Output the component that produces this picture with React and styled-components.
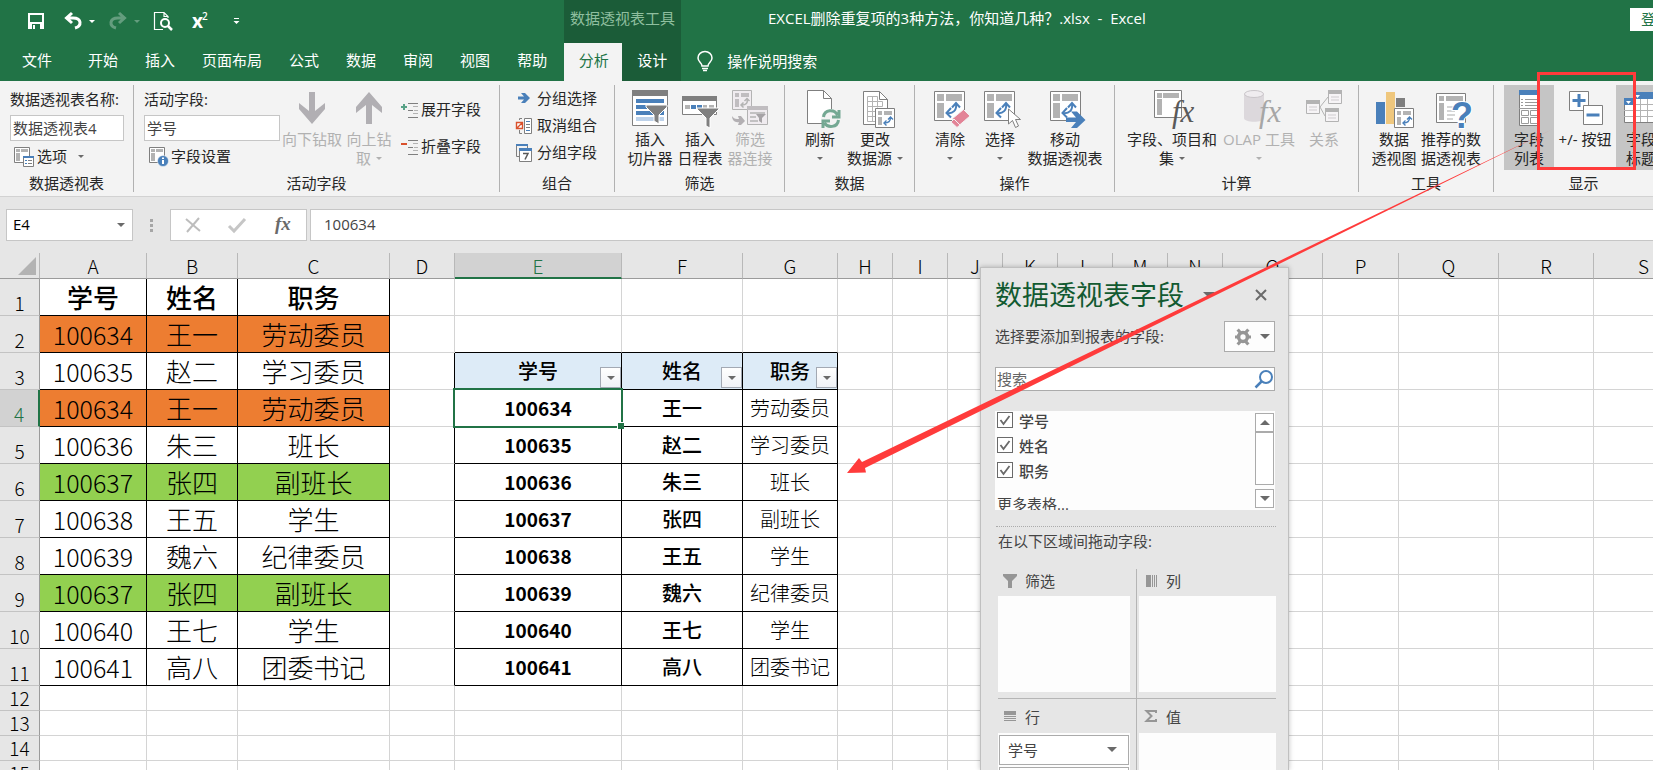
import React, { useCallback, useState } from "react";
import styled, { createGlobalStyle } from "styled-components";

const GlobalStyle = createGlobalStyle`
  * {
    box-sizing: border-box;
  }

  body {
    margin: 0;
    overflow: hidden;
    font-family: "Open Sans", "Noto Sans CJK SC", sans-serif;
    font-size: 15px;
    color: #262626;
  }

  button, input {
    font: inherit;
    color: inherit;
  }

  button {
    padding: 0;
    border: 0;
    background: none;
  }

  svg {
    display: block;
    flex: none;
    overflow: visible;
  }
`;

const Page = styled.div`
  position: relative;
  display: flex;
  flex-direction: column;
  height: 100vh;
  overflow: hidden;
  background-color: #e6e6e6;
`;

/* title bar and tabs */

const TitleBar = styled.header`
  display: flex;
  height: 43px;
  background-color: #217346;
  color: #fff;
`;

const QuickBar = styled.div`
  flex: 0 0 564px;
  display: flex;
  align-items: center;
  gap: 14px;
  padding-left: 28px;
  padding-bottom: 1px;
`;

const QuickButton = styled.button`
  display: flex;
  align-items: center;
  gap: 7px;
  color: #fff;
  opacity: ${(props) => (props.disabled ? 0.3 : 1)};

  &.plain {
    padding-right: 6px;
  }
`;

const ToolTitle = styled.div`
  flex: 0 0 117px;
  line-height: 36px;
  text-align: center;
  background-color: #1b5c38;
  color: #8fbf9f;
`;

const DocTitle = styled.div`
  flex: 1;
  padding-left: 87px;
  line-height: 36px;
  white-space: pre;
`;

const LoginButton = styled.button`
  flex: none;
  align-self: flex-start;
  height: 23px;
  margin: 8px -29px 0 0;
  padding: 0 11px;
  line-height: 23px;
  background-color: #fff;
  color: #217346;
`;

const TabBar = styled.nav`
  display: flex;
  height: 38px;
  padding-left: 9px;
  background-color: #217346;
`;

const Tab = styled.button`
  height: 38px;
  padding: 0 13px 5px 14px;
  color: #fff;

  &.file {
    margin-right: 8px;
    padding-left: 13px;
    padding-right: 14px;
  }

  &.active {
    width: 58px;
    margin-left: 4px;
    background-color: #f3f3f3;
    color: #217346;
  }

  &.tool {
    width: 59px;
    background-color: #1b5c38;
  }
`;

const TellMe = styled.button`
  display: flex;
  align-items: center;
  gap: 14px;
  margin-left: 16px;
  padding-bottom: 3px;
  color: #fff;
`;

/* ribbon */

const Ribbon = styled.section`
  display: flex;
  flex: none;
  height: 116px;
  padding-top: 4px;
  overflow: hidden;
  background-color: #f3f3f3;
  border-bottom: 1px solid #d2d2d2;
`;

const Group = styled.div`
  flex: 0 0 ${(props) => props.$width}px;
  display: flex;
  flex-direction: column;
  height: 107px;
  border-right: 1px solid #b1b1b1;
`;

const GroupBody = styled.div`
  flex: none;
  display: flex;
  height: 85px;
  padding-left: ${(props) => props.$left || 10}px;
`;

const GroupLabel = styled.div`
  flex: none;
  margin-top: 3px;
  line-height: 21px;
  text-align: center;
`;

const FieldCol = styled.div`
  width: ${(props) => props.$width}px;
`;

const FieldLabel = styled.label`
  display: block;
  height: 30px;
  line-height: 28px;
  white-space: nowrap;
`;

const FieldInput = styled.input`
  display: block;
  width: 100%;
  height: 26px;
  padding: 0 2px 1px;
  border: 1px solid #c6c6c6;
  background-color: #fff;
  color: #444;
`;

const SmallList = styled.div`
  display: flex;
  flex-direction: column;
  padding: ${(props) => props.$top || 0}px 0 0 ${(props) => props.$left || 0}px;
`;

const SmallButton = styled.button`
  display: flex;
  align-items: center;
  gap: 3px;
  height: ${(props) => props.$height || 27}px;
  line-height: 24px;
  white-space: nowrap;

  & > span {
    padding-bottom: 2px;
  }
`;

const BigButton = styled.button`
  flex: 0 0 ${(props) => props.$width || 50}px;
  display: flex;
  flex-direction: column;
  align-items: center;
  height: 85px;
  padding-top: 3px;
  line-height: 19px;
  white-space: nowrap;
  color: ${(props) => (props.disabled ? "#b1b1b1" : "#262626")};

  &.on {
    background-color: #c5c5c5;
  }

  & > svg {
    margin-bottom: 2px;
  }
`;

const Line = styled.span`
  display: flex;
  align-items: center;
  gap: 5px;
  height: 19px;
`;

const Caret = styled.i`
  width: 0;
  height: 0;
  border: ${(props) => props.$size || 3}px solid transparent;
  border-top-color: ${(props) => props.$color || "#6a6a6a"};
  border-bottom: 0;

  &.far {
    margin-left: 8px;
  }
`;

/* formula bar */

const FormulaBar = styled.div`
  display: flex;
  flex: none;
  height: 56px;
  padding: 12px 0 12px 6px;
`;

const NameBox = styled.div`
  display: flex;
  align-items: center;
  width: 127px;
  padding-right: 7px;
  border: 1px solid #c6c6c6;
  background-color: #fff;

  & > input {
    flex: 1;
    width: 60px;
    border: 0;
    padding: 0 6px 2px;
    background: none;
    color: #000;
  }
`;

const Dots = styled.div`
  display: flex;
  flex-direction: column;
  justify-content: center;
  align-items: center;
  gap: 2px;
  width: 37px;

  & > i {
    width: 3px;
    height: 3px;
    background-color: #a6a6a6;
  }
`;

const FormulaTools = styled.div`
  display: flex;
  align-items: center;
  justify-content: space-around;
  width: 137px;
  margin-right: 3px;
  border: 1px solid #c6c6c6;
  background-color: #fff;
`;

const FormulaInput = styled.input`
  flex: 1;
  padding: 0 13px 2px;
  border: 1px solid #c6c6c6;
  border-right: 0;
  background-color: #fff;
  color: #444;
`;

/* sheet */

const SheetWrap = styled.main`
  flex: 1;
  overflow: hidden;
  background-color: #fff;
`;

const Sheet = styled.table`
  width: 1694px;
  table-layout: fixed;
  border-collapse: separate;
  border-spacing: 0;
  color: #000;
  font-family: "Noto Sans CJK SC", sans-serif;

  th,
  td {
    padding: 0;
    border: 0 solid #d4d4d4;
    border-width: 0 1px 1px 0;
    text-align: center;
    white-space: nowrap;
  }
`;

const ColHead = styled.th`
  height: 26px;
  font-size: 19px;
  font-weight: 300;
  line-height: 24px;
  vertical-align: bottom;
  background-color: #e6e6e6;

  && {
    border-right-color: #b8b8b8;
    border-bottom-color: #9b9b9b;
  }

  &&.current {
    border-bottom: 2px solid #217346;
    background-color: #d2d2d2;
    color: #217346;
    line-height: 22px;
  }
`;

const Corner = styled(ColHead)`
  & > svg {
    margin: 0 3px 3px auto;
  }
`;

const RowHead = styled.th`
  height: ${(props) => props.$height}px;
  font-size: 19px;
  font-weight: 300;
  line-height: 24px;
  vertical-align: bottom;
  background-color: #e6e6e6;

  && {
    border-right-color: #9b9b9b;
    border-bottom-color: #c3c3c3;
  }

  &&.current {
    border-right: 2px solid #217346;
    background-color: #d2d2d2;
    color: #217346;
  }
`;

const Cell = styled.td`
  position: relative;
  background-color: ${(props) => props.$fill || "#fff"};
  font-size: ${(props) => props.$size || 20}px;
  font-weight: ${(props) => props.$weight || 300};
  line-height: 30px;

  && {
    border-right-color: ${(props) => (props.$right ? "#000" : "#d4d4d4")};
    border-bottom-color: ${(props) => (props.$bottom ? "#000" : "#d4d4d4")};
  }
`;

const Selection = styled.span`
  position: absolute;
  inset: -2px;
  z-index: 1;
  border: 2px solid #217346;

  &::after {
    content: "";
    position: absolute;
    right: -3px;
    bottom: -3px;
    width: 6px;
    height: 6px;
    border: 1px solid #fff;
    border-width: 1px 0 0 1px;
    background-color: #217346;
  }
`;

const FilterButton = styled.button`
  position: absolute;
  right: 0;
  bottom: 1px;
  display: flex;
  align-items: center;
  justify-content: center;
  width: 21px;
  height: 21px;
  border: 1px solid #a3a9b3;
  background-image: linear-gradient(#fff, #f0f2f6);
`;

/* pivot field pane, floats over the sheet */

const Pane = styled.aside`
  position: absolute;
  left: 980px;
  top: 267px;
  bottom: 0;
  z-index: 2;
  width: 309px;
  padding: 10px 13px 0 14px;
  overflow: hidden;
  border: 1px solid #c0c0c0;
  border-bottom: 0;
  background-color: #e6e6e6;
  box-shadow: 0 0 5px rgba(0, 0, 0, 0.25);
  color: #444;
`;

const PaneHead = styled.div`
  display: flex;
  align-items: center;
  height: 34px;
  padding-right: 8px;

  & > h2 {
    flex: 1;
    margin: 0;
    font-size: 27px;
    font-weight: 400;
    line-height: 34px;
    color: #125a31;
  }
`;

const CloseButton = styled.button`
  margin-left: 40px;
`;

const PaneRow = styled.div`
  display: flex;
  justify-content: space-between;
  height: 32px;
  margin-top: 9px;
  line-height: 30px;
`;

const GearButton = styled.button`
  display: flex;
  align-items: center;
  justify-content: center;
  gap: 9px;
  width: 51px;
  height: 31px;
  padding-left: 5px;
  border: 1px solid #ababab;
  background-color: #fdfdfd;
`;

const SearchBox = styled.div`
  display: flex;
  align-items: center;
  height: 24px;
  margin-top: 14px;
  padding-right: 1px;
  border: 1px solid #ababab;
  background-color: #fff;

  & > input {
    flex: 1;
    width: 100px;
    height: 20px;
    padding: 0 1px;
    border: 0;
  }

  & > input::placeholder {
    color: #666;
  }
`;

const FieldBox = styled.div`
  display: flex;
  height: 99px;
  margin-top: 20px;
  overflow: hidden;
  background-color: #fdfdfd;
`;

const FieldItems = styled.div`
  flex: 1;
  padding: 0 2px;
`;

const CheckRow = styled.label`
  display: flex;
  align-items: center;
  gap: 6px;
  height: 25px;
  padding-bottom: 7px;
  font-weight: 500;
`;

const CheckMark = styled.span`
  position: relative;
  display: flex;

  & > svg {
    position: absolute;
    inset: 0;
    pointer-events: none;
  }
`;

const Check = styled.input`
  appearance: none;
  width: 16px;
  height: 16px;
  margin: 0;
  border: 1px solid #6a6a6a;
  background-color: #fff;
`;

const MoreLink = styled.a`
  display: block;
  padding-top: 6px;
  line-height: 24px;
  color: #444;
  text-decoration: none;
`;

const Scroller = styled.div`
  display: flex;
  flex-direction: column;
  width: 20px;
  padding: 2px 1px 2px 0;

  & > button {
    display: flex;
    align-items: center;
    justify-content: center;
    height: 19px;
    border: 1px solid #ababab;
    background-color: #fff;
  }
`;

const Thumb = styled.div`
  height: 54px;
  margin-bottom: 4px;
  border: 1px solid #ababab;
  background-color: #fff;
`;

const Drag = styled.p`
  margin: 16px -1px 0 1px;
  padding: 2px 2px 0;
  border-top: 1px dotted #ababab;
  line-height: 25px;
`;

const Areas = styled.div`
  display: grid;
  grid-template-columns: 139px 1fr;
  margin: 15px -1px 0 3px;
`;

const Area = styled.div`
  height: 130px;
  padding: 0 6px 0 0;
  border: 0 solid #b5b5b5;
  border-width: 0 1px 1px 0;

  &:nth-child(even) {
    padding: 0 0 0 2px;
    border-right: 0;
  }

  & > h3 {
    display: flex;
    align-items: center;
    gap: 8px;
    height: 27px;
    margin: 0;
    padding: 0 0 4px 5px;
    font-size: 15px;
    font-weight: 400;
  }

  &:nth-child(n + 3) > h3 {
    height: 34px;
    padding-bottom: 0;
  }
`;

const AreaBox = styled.div`
  height: 96px;
  padding: 2px 1px;
  background-color: #fdfdfd;
`;

const AreaItem = styled.button`
  display: flex;
  align-items: center;
  justify-content: space-between;
  width: 100%;
  height: 30px;
  margin-bottom: 2px;
  padding: 0 11px 1px 8px;
  border: 1px solid #ababab;
  background-color: #fff;
`;

const Annotation = styled.svg`
  position: absolute;
  inset: 0;
  z-index: 3;
  width: 100%;
  height: 100%;
  pointer-events: none;
`;

/* icons */

const BLUE = "#4a80ba";
const GRAY = "#7f7f7f";
const SOFT = "#b3b3b3";

function Big({ children }) {
  return (
    <svg width="40" height="40" viewBox="0 0 40 40" aria-hidden="true">
      {children}
    </svg>
  );
}

function Small({ children, width = 20 }) {
  return (
    <svg width={width} height="20" viewBox={`0 0 ${width} 20`} aria-hidden="true">
      {children}
    </svg>
  );
}

function SwapArrow({ color = BLUE }) {
  return (
    <g fill="none" stroke={color} strokeWidth="2">
      <path d="M17 25C23 26 27 22 26 16" />
      <path d="M22 19.500L26 15L30 19.500M21 20L16.500 25L21 29.500" />
    </g>
  );
}

function PivotBase({ x = 0 }) {
  return (
    <g transform={`translate(${x} 0)`}>
      <path d="M4.500 3.500h30v29h-30z" fill="#fff" stroke={GRAY} />
      <path d="M7 6h7v7H7zM16 6h16v7H16zM7 15h7v15H7z" fill={SOFT} />
      <SwapArrow />
    </g>
  );
}

function MiniPivot() {
  return (
    <g>
      <path d="M20.500 20.500h19v19h-19z" fill="#fff" stroke={GRAY} />
      <path d="M23 23h4v4h-4zM29 23h8v4h-8zM23 29h4v8h-4z" fill={SOFT} />
      <path
        d="M29.500 35C33.500 35 35.500 33 35.500 29.500M33 31.500L35.500 29L38 31.500M31.500 32.500L29 35L31.500 37.500"
        fill="none"
        stroke={BLUE}
        strokeWidth="1.400"
      />
    </g>
  );
}

function FxText({ color }) {
  return (
    <text
      x="20"
      y="34"
      fill={color}
      fontFamily="Liberation Serif"
      fontStyle="italic"
      fontSize="31"
    >
      fx
    </text>
  );
}

const icons = {
  save: (
    <svg width="16" height="16" viewBox="0 0 16 16">
      <path d="M1 1h14v14H1z" fill="none" stroke="#fff" strokeWidth="2" />
      <path d="M1 9h14v7H1z" fill="#fff" />
      <path d="M4 11h8v5H4z" fill="#217346" />
      <path d="M5 12h2v4H5z" fill="#fff" />
    </svg>
  ),
  undo: (
    <svg width="18" height="18" viewBox="0 0 18 18">
      <path d="M3 6h6c9 0 9 8 2 10M8 1L2.500 6L8 11" fill="none" stroke="#fff" strokeWidth="3" />
    </svg>
  ),
  redo: (
    <svg width="18" height="18" viewBox="0 0 18 18">
      <path d="M15 6H9c-9 0-9 8-2 10M10 1l5.500 5L10 11" fill="none" stroke="#fff" strokeWidth="3" />
    </svg>
  ),
  preview: (
    <svg width="18" height="19" viewBox="0 0 18 19">
      <path d="M9 17.500H.5V.5H10l4 4V6M10 .5v4h4" fill="none" stroke="#fff" strokeWidth="1.200" />
      <circle cx="11" cy="11" r="4" fill="#217346" stroke="#fff" strokeWidth="2" />
      <path d="M14 14l4 4" stroke="#fff" strokeWidth="2.500" />
    </svg>
  ),
  down: (
    <Big>
      <path d="M17 4H23V23L33 15V21L20 36L7 21V15L17 23Z" fill="#b1afb3" />
    </Big>
  ),
  up: (
    <Big>
      <path d="M17 36H23V17L33 25V19L20 4L7 19V25L17 17Z" fill="#b1afb3" />
    </Big>
  ),
  slicer: (
    <Big>
      <path d="M2.500 2.500h35v35h-35z" fill="#fff" stroke={GRAY} />
      <path d="M2 2h36v6H2z" fill={GRAY} />
      <path d="M6 11h28v4H6zM6 17h28v4H6zM6 23h28v4H6z" fill={BLUE} />
      <path d="M6 29h28v4H6z" fill="#bdd2ea" />
      <path d="M16 17h21v2l-8 8v9l-5-3v-6l-8-8z" fill={GRAY} stroke="#fff" />
    </Big>
  ),
  timeline: (
    <Big>
      <path d="M2.500 8.500h34v18h-34z" fill="#fff" stroke={GRAY} />
      <path d="M2 8h35v5H2z" fill={GRAY} />
      <path d="M5 17h5v4H5zM23 17h4v4h-4zM29 17h5v4h-5z" fill={SOFT} />
      <path d="M11 17h5v4h-5zM17 17h5v4h-5z" fill={BLUE} />
      <path d="M17 20h22v1L30 30v10l-4-2v-8L17 21z" fill={GRAY} stroke="#fff" />
    </Big>
  ),
  filterLink: (
    <Big>
      <g fill="#f0ecf0" stroke={SOFT}>
        <path d="M2.500 2.500h19v19h-19zM17.500 18.500h20v18h-20z" />
      </g>
      <path d="M5 5h4v4H5zM11 5h8v4h-8zM5 11h4v8H5zM17 18h21v4H17z" fill="#c0bdc0" />
      <path
        d="M12 17c4 0 6-2 5-6M14.500 13l2.500-2.500 2.500 2.500M13.500 14.500L11 17l2.500 2.500M20 25h15M20 29h6M20 33h8"
        fill="none"
        stroke={SOFT}
        strokeWidth="1.500"
      />
      <path d="M26 26h10l-4 4v5l-3-2v-3z" fill="#a6a3a6" />
      <path d="M2 28c2 3 4 3 7 3l-1-3h3l4 5-4 4H8l1-3c-4 1-7-2-7-6z" fill="#b3b0b3" />
    </Big>
  ),
  refresh: (
    <Big>
      <path d="M7.500 2.500h16l8 8v25h-24z" fill="#fff" stroke={GRAY} />
      <path d="M23.500 2.500v8h8" fill="none" stroke={GRAY} />
      <circle cx="31" cy="31" r="10" fill="#f3f3f3" />
      <path
        d="M23.500 29c1-8 11-8 14-2M39 22v7h-7M38.500 32c-1 8-11 8-14 3M23 40v-7h7"
        fill="none"
        stroke="#74a893"
        strokeWidth="3"
      />
    </Big>
  ),
  source: (
    <Big>
      <path d="M8.500 3.500h16l8 8v25h-24z" fill="#fff" stroke={GRAY} />
      <path d="M24.500 3.500v8h8" fill="none" stroke={GRAY} />
      <path
        d="M12.500 8.500h10v5h5v5h-15zM12.500 18.500v15h9M12.500 13.500h10M12.500 23.500h9M12.500 28.500h9M17.500 8.500v25M22.500 13.500v6"
        fill="none"
        stroke={SOFT}
      />
      <MiniPivot />
    </Big>
  ),
  clear: (
    <Big>
      <PivotBase />
      <path d="M33.500 21.500L40 28L29 37.500L22 31Z" fill="#e38497" stroke="#f3f3f3" />
      <path d="M24 31L30 37L27 39.500L21 34Z" fill="#e38497" stroke="#f3f3f3" />
    </Big>
  ),
  select: (
    <Big>
      <PivotBase />
      <path
        d="M28.500 21v15l4-3.500 3 7 3-1.500-3-6.500h5z"
        fill="#fff"
        stroke={GRAY}
      />
    </Big>
  ),
  move: (
    <Big>
      <PivotBase x={1} />
      <path d="M21 29.500h10l-5-6h6l8.500 8.500-8.500 8h-6l5-6H21z" fill={BLUE} />
    </Big>
  ),
  fields: (
    <Big>
      <path d="M2.500 2.500h27v27h-27z" fill="#fff" stroke={GRAY} />
      <path d="M5 5h5v5H5zM11 5h16v5H11zM5 11h5v16H5z" fill={SOFT} />
      <FxText color="#5a5a5a" />
    </Big>
  ),
  olap: (
    <Big>
      <path d="M5 6v24c0 5 20 5 20 0V6z" fill="#dcd8dc" />
      <ellipse cx="15" cy="6" rx="9.500" ry="3.500" fill="#efecef" stroke="#c9c5c9" />
      <FxText color="#a6a6a6" />
    </Big>
  ),
  relation: (
    <Big>
      <path d="M16 19L24 9M16 19L21 28" stroke={SOFT} />
      <path
        d="M2.500 12.500h13v13h-13zM24.500 2.500h13v13h-13zM21.500 20.500h13v13h-13z"
        fill="#f6f4f6"
        stroke={SOFT}
      />
      <path d="M2 12h14v4H2zM24 2h14v4H24zM21 20h14v4H21z" fill={SOFT} />
      <path d="M5 19h8M5 22h8M27 9h8M27 12h8M24 27h8M24 30h8" stroke="#cfcccf" />
    </Big>
  ),
  chart: (
    <Big>
      <path d="M2 14h9v22H2z" fill={BLUE} />
      <path d="M12 4h9v32h-9z" fill="#efc77d" />
      <path d="M22 10h9v9h-9z" fill={GRAY} />
      <MiniPivot />
    </Big>
  ),
  suggest: (
    <Big>
      <path d="M5.500 5.500h29v29h-29z" fill="#fff" stroke={GRAY} />
      <path d="M8 8h5v5H8zM15 8h17v5H15zM8 15h5v17H8z" fill={SOFT} />
      <path d="M16 19h8M16 23h8M16 27h8M16 31h6" stroke="#d5d5d5" strokeWidth="2" />
      <text
        x="20"
        y="40"
        fill={BLUE}
        stroke="#fff"
        strokeWidth="2"
        paintOrder="stroke"
        fontFamily="Liberation Sans"
        fontWeight="700"
        fontSize="36"
      >
        ?
      </text>
    </Big>
  ),
  fieldList: (
    <Big>
      <path d="M10.500 2.500h20v35h-20z" fill="#fff" stroke={GRAY} />
      <path d="M10 2h21v5H10z" fill={BLUE} />
      <path
        d="M12 11.500h2M12 14.500h2M12 17.500h2M16 11.500h12M16 14.500h12M16 17.500h12M10 20.500h21M12.500 22.500h7v5h-7zM21.500 22.500h7v5h-7zM12.500 29.500h7v6h-7zM21.500 29.500h7v6h-7z"
        fill="none"
        stroke="#9a9a9a"
      />
    </Big>
  ),
  plusMinus: (
    <Big>
      <path d="M4.500 3.500h19v19h-19z" fill="#fff" stroke={GRAY} />
      <path d="M18.500 17.500h19v19h-19z" fill="#fff" stroke={GRAY} />
      <path d="M14 6v13M7.500 12.500h13M21.500 27h13" stroke={BLUE} strokeWidth="3" />
    </Big>
  ),
  headers: (
    <Big>
      <path d="M3.500 11.500h9v-7h30v30h-39z" fill="#fff" stroke={GRAY} />
      <path d="M3 10h9V4h31v7H12v6H3z" fill={BLUE} />
      <path d="M5 13h5l-2.500 3zM14 7h5l-2.500 3z" fill="#fff" />
      <path
        d="M3 22.500h40M3 28.500h40M12.500 17v17M19.500 11v23M26.500 11v23M33.500 11v23M12 16.500h31"
        stroke={SOFT}
      />
    </Big>
  ),
  options: (
    <Small>
      <path d="M.5.5h15v15H.5z" fill="#fff" stroke={GRAY} />
      <path d="M2 2h4v3H2zM7 2h7v3H7zM2 6h4v8H2z" fill={SOFT} />
      <path d="M9.500 9.500h10v10h-10z" fill="#fff" stroke={GRAY} />
      <path d="M9 9h11v2H9zM11 13h2v1h-2zM11 16h2v1h-2z" fill={BLUE} />
      <path d="M14 13.500h4M14 16.500h4" stroke={GRAY} />
    </Small>
  ),
  settings: (
    <Small width={19}>
      <path d="M.5.5h15v15H.5z" fill="#fff" stroke={GRAY} />
      <path d="M2 2h4v3H2zM7 2h7v3H7zM2 6h4v8H2z" fill={SOFT} />
      <circle cx="14" cy="14" r="5.500" fill={BLUE} stroke="#fff" strokeWidth=".5" />
      <path d="M13 10.500h2v1.500h-2zM13 13h2v4h-2z" fill="#fff" />
    </Small>
  ),
  expand: (
    <Small width={17}>
      <path d="M0 7h6M3 4v6" stroke="#58a287" strokeWidth="2" />
      <path d="M7 3.500h10M7 17.500h10M7 10.500h5" stroke={GRAY} />
      <path d="M12 6.500h5M13 10.500h4M12 13.500h5" stroke={SOFT} />
    </Small>
  ),
  collapse: (
    <Small width={17}>
      <path d="M0 7h6" stroke="#d9512c" strokeWidth="2" />
      <path d="M7 3.500h10M7 17.500h10M7 10.500h5" stroke={GRAY} />
      <path d="M12 6.500h5M13 10.500h4M12 13.500h5" stroke={SOFT} />
    </Small>
  ),
  groupSel: (
    <Small width={18}>
      <path d="M2 7.500h6L5 4h4l5 5-5 5H5l3-3.500H2z" fill={BLUE} />
    </Small>
  ),
  ungroup: (
    <Small width={18}>
      <path d="M3.500 4V2.500H6M3.500 14v3.500H6" fill="none" stroke={GRAY} />
      <path d="M8.500 2.500h7v15h-7z" fill="#fff" stroke={GRAY} />
      <path d="M10 5.500h4M10 14.500h4" stroke={BLUE} />
      <path d="M10 8.500h4M10 11.500h4" stroke={GRAY} />
      <path d="M.5 6.500h6v6h-6zM1 12L6.500 6.500" fill="#fff" stroke="#d9512c" strokeWidth="1.400" />
    </Small>
  ),
  groupField: (
    <Small width={18}>
      <path d="M4 13.500H.5v-11h11V6" fill="none" stroke={GRAY} />
      <path d="M0 1h12v2H0z" fill={BLUE} />
      <path d="M3.500 6.500h12v12h-12z" fill="#fff" stroke={GRAY} />
      <path d="M3 5h13v3H3z" fill={BLUE} />
      <path d="M7 10.500h5L9 16.500" fill="none" stroke="#5a5a5a" strokeWidth="1.500" />
    </Small>
  ),
  gear: (
    <svg width="16" height="16" viewBox="0 0 18 18">
      <circle cx="9" cy="9" r="5" fill="none" stroke="#969696" strokeWidth="4" />
      <path
        d="M3 .5L6 4M15 .5L12 4M3 17.500L6 14M15 17.500L12 14M0 9h3M15 9h3"
        stroke="#969696"
        strokeWidth="3.500"
      />
    </svg>
  ),
};

function RibbonButton({ icon, lines, drop, ...rest }) {
  const color = rest.disabled ? "#b1b1b1" : undefined;
  return (
    <BigButton {...rest}>
      {icons[icon]}
      {lines.map((line, i) => (
        <Line key={i}>
          {line}
          {drop && i === lines.length - 1 && <Caret $color={color} />}
        </Line>
      ))}
    </BigButton>
  );
}

function RibbonItem({ icon, label, height, drop }) {
  return (
    <SmallButton $height={height}>
      {icons[icon]}
      <span>{label}</span>
      {drop && <Caret className="far" />}
    </SmallButton>
  );
}

function RibbonGroup({ label, width, left, children }) {
  return (
    <Group $width={width}>
      <GroupBody $left={left}>{children}</GroupBody>
      <GroupLabel>{label}</GroupLabel>
    </Group>
  );
}

/* data */

const tabs = ["开始", "插入", "页面布局", "公式", "数据", "审阅", "视图", "帮助"];

const columns = [
  ["A", 107],
  ["B", 91],
  ["C", 152],
  ["D", 65],
  ["E", 167],
  ["F", 121],
  ["G", 95],
  ["H", 55],
  ["I", 55],
  ["J", 55],
  ["K", 55],
  ["L", 55],
  ["M", 55],
  ["N", 55],
  ["O", 100],
  ["P", 76],
  ["Q", 100],
  ["R", 95],
  ["S", 100],
];

const source = [
  ["学号", "姓名", "职务"],
  ["100634", "王一", "劳动委员", "#ed7d31"],
  ["100635", "赵二", "学习委员"],
  ["100634", "王一", "劳动委员", "#ed7d31"],
  ["100636", "朱三", "班长"],
  ["100637", "张四", "副班长", "#92d050"],
  ["100638", "王五", "学生"],
  ["100639", "魏六", "纪律委员"],
  ["100637", "张四", "副班长", "#92d050"],
  ["100640", "王七", "学生"],
  ["100641", "高八", "团委书记"],
];

const pivot = [
  ["学号", "姓名", "职务"],
  ["100634", "王一", "劳动委员"],
  ["100635", "赵二", "学习委员"],
  ["100636", "朱三", "班长"],
  ["100637", "张四", "副班长"],
  ["100638", "王五", "学生"],
  ["100639", "魏六", "纪律委员"],
  ["100640", "王七", "学生"],
  ["100641", "高八", "团委书记"],
];

const rows = Array.from({ length: 15 }, (_, i) => i + 1);

function SourceCell({ row, col }) {
  const data = source[row - 1];
  const text = data[col];
  return (
    <Cell
      $right
      $bottom
      $weight={row === 1 ? 500 : 300}
      $fill={data[3]}
      $size={/\d/.test(text) ? 25 : 26}
    >
      {text}
    </Cell>
  );
}

function PivotCell({ row, col }) {
  const text = pivot[row - 3][col];
  const head = row === 3;
  const digits = /\d/.test(text);
  const strong = head || col < 2;
  return (
    <Cell
      $right
      $bottom
      $weight={digits ? 700 : strong ? 500 : 300}
      $fill={head ? "#ddebf7" : undefined}
      $size={digits ? 19 : 20}
    >
      {text}
      {head && (
        <FilterButton aria-label={`筛选 ${text}`}>
          <Caret $size={4} />
        </FilterButton>
      )}
      {row === 4 && col === 0 && <Selection />}
    </Cell>
  );
}

function SheetCell({ row, col }) {
  if (col < 3 && row <= 11) return <SourceCell row={row} col={col} />;
  if (col >= 4 && col <= 6 && row >= 3 && row <= 11) {
    return <PivotCell row={row} col={col - 4} />;
  }
  return (
    <Cell
      $right={col === 3 && row >= 3 && row <= 11}
      $bottom={row === 2 && col >= 4 && col <= 6}
    />
  );
}

function Grid() {
  return (
    <SheetWrap>
      <Sheet>
        <colgroup>
          <col width="40" />
          {columns.map(([name, width]) => (
            <col key={name} width={width} />
          ))}
        </colgroup>
        <thead>
          <tr>
            <Corner>
              <svg width="18" height="18" viewBox="0 0 18 18">
                <path d="M18 0v18H0z" fill="#b3b3b3" />
              </svg>
            </Corner>
            {columns.map(([name]) => (
              <ColHead key={name} className={name === "E" ? "current" : ""}>
                {name}
              </ColHead>
            ))}
          </tr>
        </thead>
        <tbody>
          {rows.map((row) => (
            <tr key={row}>
              <RowHead
                $height={row <= 11 ? 37 : 25}
                className={row === 4 ? "current" : ""}
              >
                {row}
              </RowHead>
              {columns.map(([name], col) => (
                <SheetCell key={name} row={row} col={col} />
              ))}
            </tr>
          ))}
        </tbody>
      </Sheet>
    </SheetWrap>
  );
}

function FieldPane() {
  const [fields, setFields] = useState({ 学号: true, 姓名: true, 职务: true });

  const onChangeField = useCallback(
    (e) => {
      const { name, checked } = e.target;
      setFields({ ...fields, [name]: checked });
    },
    [fields]
  );

  return (
    <Pane>
      <PaneHead>
        <h2>数据透视表字段</h2>
        <Caret $size={6} />
        <CloseButton aria-label="关闭">
          <svg width="12" height="12" viewBox="0 0 12 12">
            <path d="M1 1l10 10M11 1L1 11" stroke="#6a6a6a" strokeWidth="2" />
          </svg>
        </CloseButton>
      </PaneHead>
      <PaneRow>
        选择要添加到报表的字段:
        <GearButton aria-label="工具">
          {icons.gear}
          <Caret $size={5} />
        </GearButton>
      </PaneRow>
      <SearchBox>
        <input type="text" placeholder="搜索" aria-label="搜索" />
        <svg width="18" height="18" viewBox="0 0 18 18">
          <circle cx="11" cy="7" r="6" fill="none" stroke={BLUE} strokeWidth="2" />
          <path d="M7 11l-6.500 6.500" stroke={BLUE} strokeWidth="2.500" />
        </svg>
      </SearchBox>
      <FieldBox>
        <FieldItems>
          {Object.keys(fields).map((name) => (
            <CheckRow key={name}>
              <CheckMark>
                <Check
                  type="checkbox"
                  name={name}
                  checked={fields[name]}
                  onChange={onChangeField}
                />
                {fields[name] && (
                  <svg width="16" height="16" viewBox="0 0 16 16">
                    <path
                      d="M3.500 8l3 4 6-8"
                      fill="none"
                      stroke="#6a6a6a"
                      strokeWidth="1.800"
                    />
                  </svg>
                )}
              </CheckMark>
              {name}
            </CheckRow>
          ))}
          <MoreLink href="#more">更多表格...</MoreLink>
        </FieldItems>
        <Scroller>
          <button aria-label="向上">
            <svg width="10" height="5" viewBox="0 0 10 5">
              <path d="M0 5l5-5 5 5z" fill="#6a6a6a" />
            </svg>
          </button>
          <Thumb />
          <button aria-label="向下">
            <Caret $size={5} />
          </button>
        </Scroller>
      </FieldBox>
      <Drag>在以下区域间拖动字段:</Drag>
      <Areas>
        <Area>
          <h3>
            <svg width="14" height="14" viewBox="0 0 14 14">
              <path d="M0 0h14v2L9 7v7H5V7L0 2z" fill="#969696" />
            </svg>
            筛选
          </h3>
          <AreaBox />
        </Area>
        <Area>
          <h3>
            <svg width="14" height="12" viewBox="0 0 14 12">
              <path d="M2 0h5v12H2zM8 0h1v12H8zM10 0h1v12h-1zM12 0h1v12h-1z" fill="#969696" />
            </svg>
            列
          </h3>
          <AreaBox />
        </Area>
        <Area>
          <h3>
            <svg width="14" height="12" viewBox="0 0 14 12">
              <path d="M1 1h12v4H1zM1 6h12v1H1zM1 8h12v1H1zM1 10h12v1H1z" fill="#969696" />
            </svg>
            行
          </h3>
          <AreaBox>
            <AreaItem>
              学号
              <Caret $size={5} />
            </AreaItem>
            <AreaItem>
              姓名
              <Caret $size={5} />
            </AreaItem>
          </AreaBox>
        </Area>
        <Area>
          <h3>
            <svg width="14" height="12" viewBox="0 0 14 12">
              <path
                d="M12 3V1H2.500l5 5-5 5H12V9"
                fill="none"
                stroke="#969696"
                strokeWidth="2"
              />
            </svg>
            值
          </h3>
          <AreaBox />
        </Area>
      </Areas>
    </Pane>
  );
}

function App() {
  return (
    <Page>
      <GlobalStyle />
      <TitleBar>
        <QuickBar>
          <QuickButton className="plain" aria-label="保存">
            {icons.save}
          </QuickButton>
          <QuickButton aria-label="撤消">
            {icons.undo}
            <Caret $color="#fff" />
          </QuickButton>
          <QuickButton aria-label="恢复" disabled>
            {icons.redo}
            <Caret $color="#fff" />
          </QuickButton>
          <QuickButton className="plain" aria-label="打印预览">
            {icons.preview}
          </QuickButton>
          <QuickButton className="plain" aria-label="上标">
            <svg width="20" height="18" viewBox="0 0 20 18">
              <text x="0" y="16" fill="#fff" fontSize="19" fontWeight="700">
                x
              </text>
              <text x="10" y="8" fill="#fff" fontSize="10" fontWeight="600">
                2
              </text>
            </svg>
          </QuickButton>
          <QuickButton aria-label="自定义">
            <svg width="10" height="6" viewBox="0 0 10 6">
              <path d="M2 0h5v1H2zM1.500 3h6l-3 3z" fill="#fff" />
            </svg>
          </QuickButton>
        </QuickBar>
        <ToolTitle>数据透视表工具</ToolTitle>
        <DocTitle>
          {"EXCEL删除重复项的3种方法，你知道几种？.xlsx  -  Excel"}
        </DocTitle>
        <LoginButton>登录</LoginButton>
      </TitleBar>
      <TabBar>
        <Tab className="file">文件</Tab>
        {tabs.map((name) => (
          <Tab key={name}>{name}</Tab>
        ))}
        <Tab className="active">分析</Tab>
        <Tab className="tool">设计</Tab>
        <TellMe>
          <svg width="16" height="20" viewBox="0 0 16 20">
            <path
              d="M5 15c0-3-4-4-4-8a7 6.500 0 0 1 14 0c0 4-4 5-4 8zM5 17.500h6M6 19.500h4"
              fill="none"
              stroke="#fff"
              strokeWidth="1.500"
            />
          </svg>
          操作说明搜索
        </TellMe>
      </TabBar>

      <Ribbon>
        <RibbonGroup label="数据透视表" width={134}>
          <FieldCol $width={114}>
            <FieldLabel htmlFor="pivot-name">数据透视表名称:</FieldLabel>
            <FieldInput id="pivot-name" defaultValue="数据透视表4" />
            <SmallList $top={2} $left={4}>
              <RibbonItem icon="options" label="选项" drop />
            </SmallList>
          </FieldCol>
        </RibbonGroup>
        <RibbonGroup label="活动字段" width={366}>
          <FieldCol $width={136}>
            <FieldLabel htmlFor="active-field">活动字段:</FieldLabel>
            <FieldInput id="active-field" defaultValue="学号" />
            <SmallList $top={2} $left={5}>
              <RibbonItem icon="settings" label="字段设置" />
            </SmallList>
          </FieldCol>
          <RibbonButton icon="down" lines={["向下钻取"]} $width={64} disabled />
          <RibbonButton icon="up" lines={["向上钻", "取"]} $width={50} drop disabled />
          <SmallList $top={6} $left={7}>
            <RibbonItem icon="expand" label="展开字段" height={37} />
            <RibbonItem icon="collapse" label="折叠字段" height={37} />
          </SmallList>
        </RibbonGroup>
        <RibbonGroup label="组合" width={115} left={16}>
          <SmallList>
            <RibbonItem icon="groupSel" label="分组选择" />
            <RibbonItem icon="ungroup" label="取消组合" />
            <RibbonItem icon="groupField" label="分组字段" />
          </SmallList>
        </RibbonGroup>
        <RibbonGroup label="筛选" width={170}>
          <RibbonButton icon="slicer" lines={["插入", "切片器"]} />
          <RibbonButton icon="timeline" lines={["插入", "日程表"]} />
          <RibbonButton icon="filterLink" lines={["筛选", "器连接"]} disabled />
        </RibbonGroup>
        <RibbonGroup label="数据" width={130}>
          <RibbonButton icon="refresh" lines={["刷新", ""]} drop />
          <RibbonButton icon="source" lines={["更改", "数据源"]} $width={60} drop />
        </RibbonGroup>
        <RibbonGroup label="操作" width={200}>
          <RibbonButton icon="clear" lines={["清除", ""]} drop />
          <RibbonButton icon="select" lines={["选择", ""]} drop />
          <RibbonButton icon="move" lines={["移动", "数据透视表"]} $width={80} />
        </RibbonGroup>
        <RibbonGroup label="计算" width={244}>
          <RibbonButton icon="fields" lines={["字段、项目和", "集"]} $width={94} drop />
          <RibbonButton icon="olap" lines={["OLAP 工具", ""]} $width={80} drop disabled />
          <RibbonButton icon="relation" lines={["关系"]} disabled />
        </RibbonGroup>
        <RibbonGroup label="工具" width={135}>
          <RibbonButton icon="chart" lines={["数据", "透视图"]} />
          <RibbonButton icon="suggest" lines={["推荐的数", "据透视表"]} $width={64} />
        </RibbonGroup>
        <RibbonGroup label="显示" width={180}>
          <RibbonButton icon="fieldList" lines={["字段", "列表"]} className="on" />
          <RibbonButton icon="plusMinus" lines={["+/- 按钮"]} $width={62} />
          <RibbonButton icon="headers" lines={["字段", "标题"]} className="on" />
        </RibbonGroup>
      </Ribbon>

      <FormulaBar>
        <NameBox>
          <input defaultValue="E4" aria-label="名称框" />
          <Caret $size={4} />
        </NameBox>
        <Dots>
          <i />
          <i />
          <i />
        </Dots>
        <FormulaTools>
          <button aria-label="取消">
            <svg width="16" height="16" viewBox="0 0 16 16">
              <path d="M1 2l14 12M14 1L2 15" stroke="#bdbdbd" strokeWidth="2" />
            </svg>
          </button>
          <button aria-label="输入">
            <svg width="18" height="16" viewBox="0 0 18 16">
              <path d="M1 9l5 5L17 2" fill="none" stroke="#c6c6c6" strokeWidth="3" />
            </svg>
          </button>
          <button aria-label="插入函数">
            <svg width="18" height="20" viewBox="0 0 18 20">
              <text
                x="1"
                y="15"
                fill="#6a6a6a"
                fontFamily="Liberation Serif"
                fontStyle="italic"
                fontWeight="700"
                fontSize="19"
              >
                fx
              </text>
            </svg>
          </button>
        </FormulaTools>
        <FormulaInput defaultValue="100634" aria-label="编辑栏" />
      </FormulaBar>

      <Grid />
      <FieldPane />

      <Annotation aria-hidden="true">
        <path d="M1538.500 73.500h96v95h-96z" fill="none" stroke="#ff3b3b" strokeWidth="3" />
        <path d="M847 473L859 458L862 462L1553 129L865 468L866 472.500Z" fill="#ff3b3b" />
      </Annotation>
    </Page>
  );
}

export default App;
